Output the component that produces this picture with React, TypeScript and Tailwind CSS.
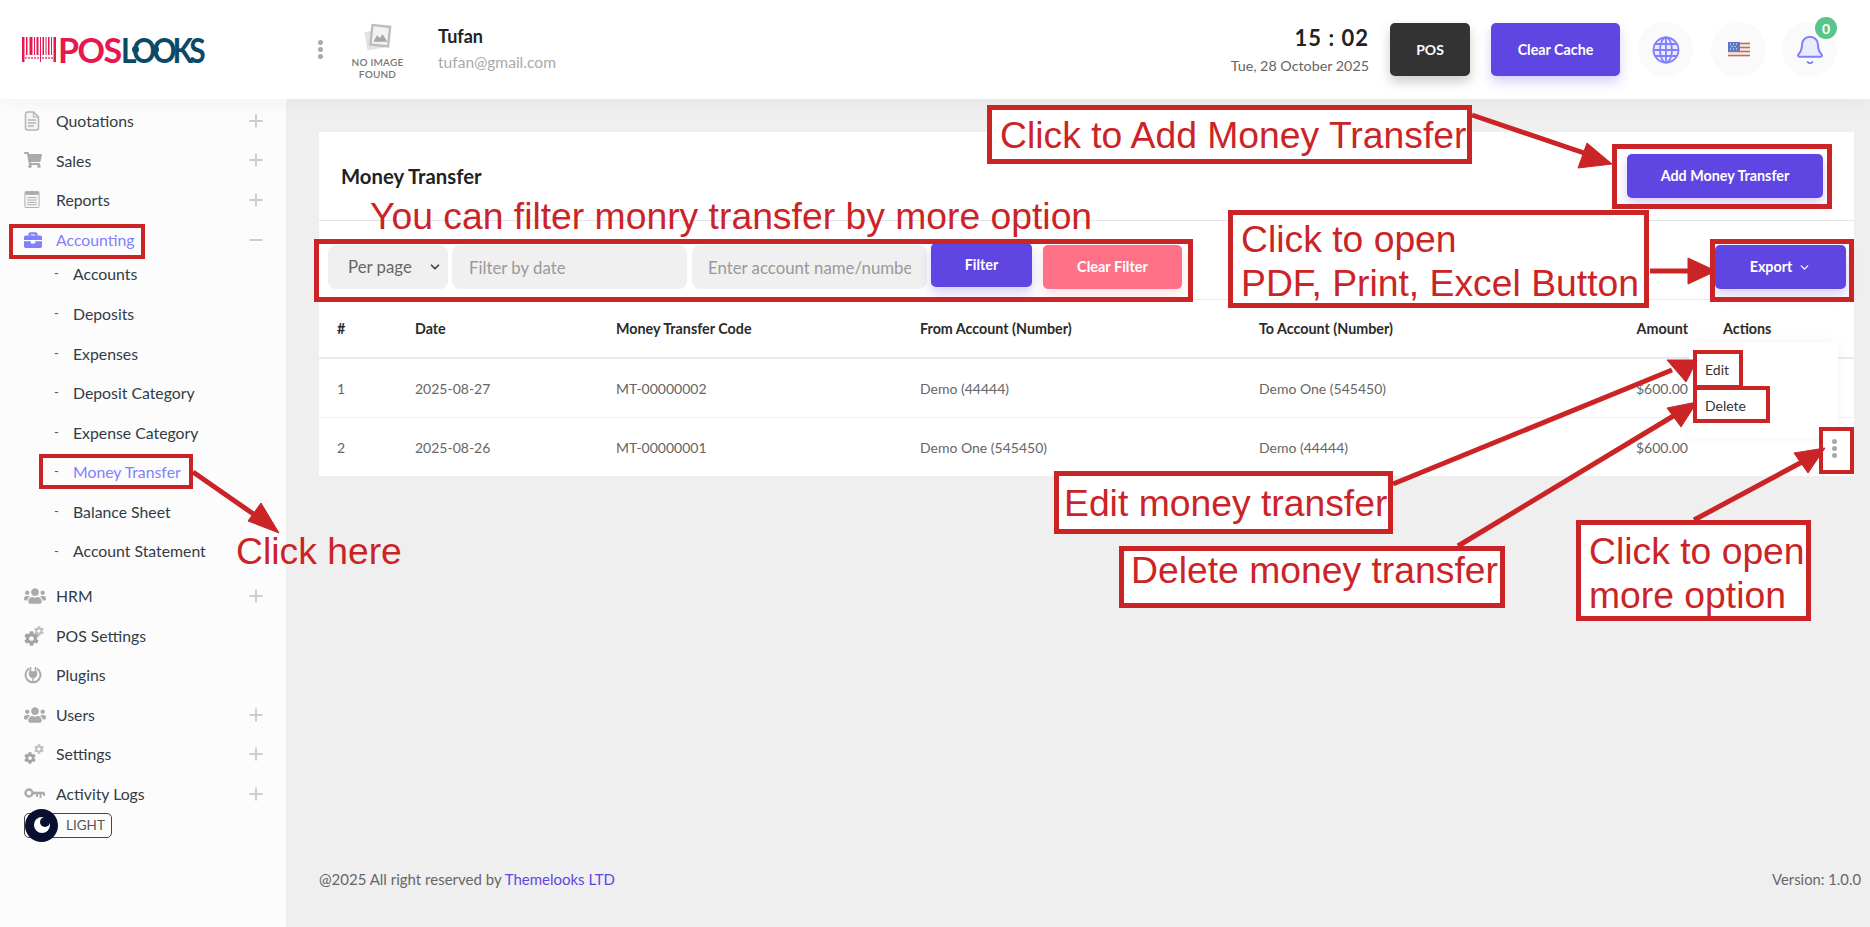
import { Bell, Plus, Minus, ChevronDown } from "lucide-react";
import { FaShoppingCart, FaBriefcase, FaUsers, FaCog } from "react-icons/fa";
import type { ReactNode } from "react";

const FileIcon = () => (
  <svg viewBox="0 0 16 20" className="w-[16px] h-[20px]">
    <path d="M1.500 3a2 2 0 0 1 2-2h6l5 5v11a2 2 0 0 1-2 2h-9a2 2 0 0 1-2-2z" fill="#f4f4f4" stroke="#b4b4b4" strokeWidth="1.500" />
    <path d="M9.500 1v5h5" fill="none" stroke="#b4b4b4" strokeWidth="1.200" />
    <path d="M4 9h8M4 12h8M4 15h6" stroke="#b4b4b4" strokeWidth="1.400" />
  </svg>
);
const ReportIcon = () => (
  <svg viewBox="0 0 16 18" className="w-[16px] h-[17px]">
    <rect x="0.500" y="0.500" width="15" height="17" rx="1" fill="#f6f6f6" stroke="#aaa" />
    <rect x="1" y="1" width="14" height="3" fill="#aaa" />
    <path d="M3 7h10M3 9.500h10M3 12h10M3 14.500h10" stroke="#aaa" strokeWidth="1" />
  </svg>
);
const PlugIcon = () => (
  <svg viewBox="0 0 18 18" className="w-[18px] h-[18px]" fill="none" stroke="#aaa">
    <path d="M5 2.500a7.500 7.500 0 1 0 8 0" strokeWidth="2" />
    <path d="M6.500 1v5M11.500 1v5" strokeWidth="1.600" />
    <path d="M5.500 6h7v2a3.500 3.500 0 0 1-7 0zM9 11v5" fill="#aaa" strokeWidth="1.400" />
  </svg>
);
const KeyIcon = () => (
  <svg viewBox="0 0 21 11" className="w-[21px] h-[11px]" fill="none" stroke="#aaa">
    <circle cx="5" cy="5" r="3.500" strokeWidth="2.400" />
    <path d="M8.500 5H20.500" strokeWidth="2.600" />
    <path d="M13 5v4M16.500 5v5M20 5v3" strokeWidth="1.800" />
  </svg>
);
const Gears = ({ big, small }: { big: number; small: number }) => (
  <span className="relative block w-[20px] h-[20px]">
    <FaCog size={big} className="absolute left-0 bottom-0 text-[#a4a4a4]" />
    <FaCog size={small} className="absolute right-0 top-0 text-[#c0c0c0]" />
  </span>
);

type Item = { label: string; icon: ReactNode; toggle?: "plus" | "minus"; active?: boolean };
const SideRow = ({ label, icon, toggle, active }: Item) => (
  <div className="h-[39.6px] flex items-center pl-[24px] pr-[20px]">
    <span className="w-[32px] flex items-center">{icon}</span>
    <span className={active ? "text-[#8080ff]" : "text-[#333b45]"}>{label}</span>
    {toggle === "plus" && <Plus size={20} strokeWidth={2.3} className="ml-auto text-[#cdcdcd]" />}
    {toggle === "minus" && <Minus size={20} strokeWidth={2.3} className="ml-auto text-[#cdcdcd]" />}
  </div>
);
const SubRow = ({ label, active }: { label: string; active?: boolean }) => (
  <div className="h-[39.6px] flex items-center pl-[54px]">
    <span className="w-[19px] text-[#555] text-[13px]">-</span>
    <span className={active ? "text-[#8080ff]" : "text-[#333b45]"}>{label}</span>
  </div>
);

const Barcode = () => (
  <svg viewBox="0 0 34 25" className="w-[34px] h-[25px]" fill="#e8174f">
    <path d="M0 0h2.500v25H0zM4 0h1.500v18H4zM7.500 0h3v18h-3zM12 0h1v18h-1zM14.500 0h2v18h-2zM18 0h1v25h-1zM20.500 0h1.500v18h-1.500zM23.500 0h1v18h-1zM26 0h1.500v18H26zM29 0h1v18h-1zM31.500 0h2.500v25h-2.500z" />
    <path d="M3 21h14M20 21h11" stroke="#e8174f" strokeWidth="2" strokeDasharray="2 1" opacity="0.6" />
  </svg>
);

const Logo = () => (
  <div className="relative flex items-center h-[25px]">
    <Barcode />
    <span className="text-[34px] leading-none font-bold tracking-[-1.5px] text-[#e8174f] ml-[2px]">POS</span>
    <span className="text-[34px] leading-none font-bold tracking-[-4.4px] text-[#0b4a66] origin-left scale-x-[0.88]">LOOKS</span>
    <span className="absolute left-[110px] top-[9px] w-[7px] h-[7px] rounded-full bg-[#0b4a66]" />
    <span className="absolute left-[130px] top-[9px] w-[7px] h-[7px] rounded-full bg-[#0b4a66]" />
  </div>
);

const NoImage = () => (
  <div className="w-[49px] mt-[3px] flex flex-col items-center">
    <svg viewBox="0 0 30 32" className="w-[28px] h-[30px]">
      <rect x="2" y="8" width="18" height="20" fill="#e2e2e2" transform="rotate(-10 11 18)" />
      <rect x="8" y="3" width="19" height="21" fill="#f2f2f2" stroke="#bdbdbd" strokeWidth="2.500" transform="rotate(6 17 13)" />
      <path d="M10 20l4-7 3 3 3-4 5 8z" fill="#a8a8a8" />
    </svg>
    <div className="text-[10px] leading-[12px] text-[#777] font-semibold text-center mt-[3px] whitespace-nowrap tracking-[0.2px]">NO IMAGE<br />FOUND</div>
  </div>
);

const Kebab = () => (
  <div className="flex flex-col gap-[2px] items-center w-[5px]">
    <span className="w-[5px] h-[5px] rounded-full bg-[#a8a8a8]" />
    <span className="w-[5px] h-[5px] rounded-full bg-[#a8a8a8]" />
    <span className="w-[5px] h-[5px] rounded-full bg-[#a8a8a8]" />
  </div>
);

const Flag = () => (
  <svg viewBox="0 0 22 15" className="w-[22px] h-[15px]">
    <rect width="22" height="15" fill="#f2ece6" />
    <path d="M0 1.500h22M0 5.500h22M0 9.500h22M0 13.500h22" stroke="#d4605c" strokeWidth="1.600" />
    <rect width="12" height="9" fill="#5a78c8" />
    <path d="M2 2h1M5 2h1M8 2h1M3.500 4.500h1M6.500 4.500h1M2 7h1M5 7h1M8 7h1" stroke="#fff" strokeWidth="1" />
  </svg>
);
const GlobeIcon = () => (
  <svg viewBox="0 0 28 28" className="w-[28px] h-[28px]" fill="#ebebff" stroke="#8080ff" strokeWidth="1.800">
    <circle cx="14" cy="14" r="12.500" />
    <ellipse cx="14" cy="14" rx="6" ry="12.500" />
    <path d="M14 1.500v25M3 8h22M1.500 14h25M3 20h22" fill="none" />
  </svg>
);

const rows = [
  ["1", "2025-08-27", "MT-00000002", "Demo (44444)", "Demo One (545450)", "$600.00"],
  ["2", "2025-08-26", "MT-00000001", "Demo One (545450)", "Demo (44444)", "$600.00"],
];
const tableCols = "grid grid-cols-[78px_201px_304px_339px_339px_90px_1fr] items-center pl-[18px]";

const Label = ({ className, children }: { className: string; children: ReactNode }) => (
  <div className={"absolute z-10 bg-white border-[5px] border-[#cb2427] font-['Liberation_Sans',sans-serif] text-[37.3px] leading-[44px] text-[#cb2427] whitespace-nowrap " + className}>{children}</div>
);

const Overlay = () => (
  <>
    <svg viewBox="0 0 1870 927" className="absolute left-0 top-0 w-[1870px] h-[927px] z-20 pointer-events-none">
      <g stroke="#cb2427" strokeWidth="5" fill="#cb2427">
        <line x1="1472" y1="115" x2="1590" y2="155" />
        <polygon points="1612,164 1587,143 1578,168" strokeWidth="1" />
        <line x1="1650" y1="271" x2="1692" y2="271" />
        <polygon points="1716,271 1688,258 1688,284" strokeWidth="1" />
        <line x1="1393" y1="484" x2="1672" y2="370" />
        <polygon points="1697,360 1667,360 1686,382" strokeWidth="1" />
        <line x1="1458" y1="546" x2="1675" y2="415" />
        <polygon points="1697,402 1667,408 1681,427" strokeWidth="1" />
        <line x1="1694" y1="520" x2="1802" y2="462" />
        <polygon points="1825,448 1794,453 1808,473" strokeWidth="1" />
        <line x1="193" y1="472" x2="262" y2="520" />
        <polygon points="279,533 248,521 261,503" strokeWidth="1" />
      </g>
    </svg>
    <div className="absolute z-10 left-[9px] top-[224px] w-[136px] h-[35px] border-[4px] border-[#cb2427]" />
    <div className="absolute z-10 left-[39px] top-[454px] w-[154px] h-[35px] border-[4px] border-[#cb2427]" />
    <div className="absolute z-10 left-[314px] top-[239px] w-[879px] h-[63px] border-[5px] border-[#cb2427]" />
    <div className="absolute z-10 left-[1612px] top-[144px] w-[220px] h-[65px] border-[5px] border-[#cb2427]" />
    <div className="absolute z-10 left-[1710px] top-[239px] w-[144px] h-[63px] border-[5px] border-[#cb2427]" />
    <div className="absolute z-10 left-[1693px] top-[350px] w-[50px] h-[39px] border-[4px] border-[#cb2427] bg-white text-[14px] text-[#333] pl-[8px] leading-[32px]">Edit</div>
    <div className="absolute z-10 left-[1693px] top-[386px] w-[77px] h-[37px] border-[4px] border-[#cb2427] bg-white text-[14px] text-[#333] pl-[8px] leading-[31px]">Delete</div>
    <div className="absolute z-10 left-[1819px] top-[427px] w-[35px] h-[47px] border-[4px] border-[#cb2427] bg-white flex items-center pl-[9px] pb-[5px]"><Kebab /></div>
    <Label className="left-[987px] top-[105px] w-[485px] h-[59px] pl-[8px] pt-[3px]">Click to Add Money Transfer</Label>
    <Label className="left-[1228px] top-[210px] w-[421px] h-[98px] pl-[8px] pt-[2px]">Click to open<br />PDF, Print, Excel Button</Label>
    <Label className="left-[1054px] top-[471px] w-[339px] h-[63px] pl-[5px] pt-[5px]">Edit money transfer</Label>
    <Label className="left-[1119px] top-[546px] w-[386px] h-[62px] pl-[7px]"><span className="block -mt-[3px]">Delete money transfer</span></Label>
    <Label className="left-[1576px] top-[520px] w-[235px] h-[101px] pl-[8px] pt-[4px]">Click to open<br />more option</Label>
    <div className="absolute z-10 left-[370px] top-[194px] font-['Liberation_Sans',sans-serif] text-[37.3px] leading-[44px] text-[#cb2427] whitespace-nowrap">You can filter monry transfer by more option</div>
    <div className="absolute z-10 left-[236px] top-[529px] font-['Liberation_Sans',sans-serif] text-[37.3px] leading-[44px] text-[#cb2427] whitespace-nowrap">Click here</div>
  </>
);

export default function App() {
  return (
    <div className="relative w-[1870px] h-[927px] overflow-hidden bg-[#efefef] font-['Lato',sans-serif] text-[15.8px] flex flex-col">
      <header className="h-[99px] shrink-0 bg-white flex items-center pl-[22px] pr-[33px] shadow-[0_4px_20px_rgba(0,0,0,0.04)] z-[1]">
        <div className="w-[296px]"><Logo /></div>
        <Kebab />
        <div className="ml-[30px]"><NoImage /></div>
        <div className="ml-[36px] -mt-[4px]">
          <div className="text-[18px] font-bold text-[#222] leading-[24px]">Tufan</div>
          <div className="text-[15.6px] text-[#aaa] mt-[4px] leading-[20px]">tufan@gmail.com</div>
        </div>
        <div className="ml-auto text-right">
          <div className="text-[22px] font-bold text-[#222] leading-[28px] tracking-[1px]">15 : 02</div>
          <div className="text-[14.3px] text-[#666] leading-[18px] mt-[5px]">Tue, 28 October 2025</div>
        </div>
        <div className="ml-[21px] w-[80px] h-[53px] rounded-[5px] bg-[#333] text-white text-[14px] font-bold flex items-center justify-center shadow-[0_6px_12px_rgba(0,0,0,0.2)]">POS</div>
        <div className="ml-[21px] w-[129px] h-[53px] rounded-[5px] bg-[#5f45e2] text-white text-[14.3px] font-bold flex items-center justify-center shadow-[0_6px_12px_rgba(95,69,226,0.25)]">Clear Cache</div>
        <div className="ml-[18px] w-[55px] h-[55px] rounded-full bg-[#fafafa] flex items-center justify-center"><GlobeIcon /></div>
        <div className="ml-[18px] w-[55px] h-[55px] rounded-full bg-[#fafafa] flex items-center justify-center"><Flag /></div>
        <div className="relative ml-[16px] w-[55px] h-[55px] rounded-full bg-[#fafafa] flex items-center justify-center">
          <Bell size={32} strokeWidth={1.5} fill="#ebebff" className="text-[#8080ff]" />
          <span className="absolute right-0 top-[-5px] w-[22px] h-[22px] rounded-full bg-[#5ac58b] text-white text-[14px] font-bold flex items-center justify-center">0</span>
        </div>
      </header>

      <div className="flex flex-1 min-h-0">
        <aside className="w-[286px] shrink-0 bg-[#fcfcfc] pt-[2px]">
          <SideRow label="Quotations" toggle="plus" icon={<FileIcon />} />
          <SideRow label="Sales" toggle="plus" icon={<FaShoppingCart size={18} className="text-[#aaa]" />} />
          <SideRow label="Reports" toggle="plus" icon={<ReportIcon />} />
          <SideRow label="Accounting" toggle="minus" active icon={<FaBriefcase size={18} className="text-[#8080ff]" />} />
          <div className="-mt-[5px]">
            <SubRow label="Accounts" />
            <SubRow label="Deposits" />
            <SubRow label="Expenses" />
            <SubRow label="Deposit Category" />
            <SubRow label="Expense Category" />
            <SubRow label="Money Transfer" active />
            <SubRow label="Balance Sheet" />
            <SubRow label="Account Statement" />
          </div>
          <div className="h-[5px]" />
          <SideRow label="HRM" toggle="plus" icon={<FaUsers size={22} className="text-[#aaa]" />} />
          <SideRow label="POS Settings" icon={<Gears big={15} small={10} />} />
          <SideRow label="Plugins" icon={<PlugIcon />} />
          <SideRow label="Users" toggle="plus" icon={<FaUsers size={22} className="text-[#aaa]" />} />
          <SideRow label="Settings" toggle="plus" icon={<Gears big={12} small={10} />} />
          <SideRow label="Activity Logs" toggle="plus" icon={<KeyIcon />} />
          <div className="relative ml-[24px] mt-[-1px] w-[88px] h-[25px] border border-[#444] rounded-[5px] text-[13.5px] text-[#555] pl-[41px] leading-[23px]">
            LIGHT
            <span className="absolute left-[0px] top-[-5px] w-[33px] h-[33px] rounded-full bg-[#071030] flex items-center justify-center">
              <svg viewBox="0 0 16 16" className="w-[16px] h-[16px]"><circle cx="8" cy="8" r="8" fill="#fff" /><circle cx="11" cy="5" r="5" fill="#071030" /></svg>
            </span>
          </div>
        </aside>

        <main className="flex-1 min-w-0 pl-[33px] pr-[16px] pt-[33px] flex flex-col">
          <section className="relative bg-white h-[344px] text-[14px]">
            <div className="h-[88px] flex items-start pl-[22px] pr-[31px] justify-between">
              <h1 className="mt-[30px] text-[20.3px] font-bold leading-[28px] text-[#222]">Money Transfer</h1>
              <div className="mt-[22px] w-[196px] h-[44px] rounded-[5px] bg-[#5f45e2] text-white text-[14.3px] font-bold flex items-center justify-center shadow-[0_6px_12px_rgba(95,69,226,0.25)]">Add Money Transfer</div>
            </div>
            <div className="h-[1px] bg-[#e3e3ea]" />
            <div className="h-[79px] border-b border-[#e8e8ee] flex items-start pt-[24px] pl-[9px] pr-[8px] gap-[4px]">
              <div className="w-[120px] h-[44px] rounded-[8px] bg-[#f0f0f0] flex items-center pl-[20px] pr-[6px] text-[16.8px] text-[#666]">Per page<ChevronDown size={14} strokeWidth={3} className="ml-auto text-[#444]" /></div>
              <input readOnly placeholder="Filter by date" className="w-[235px] h-[44px] rounded-[8px] bg-[#f0f0f0] pl-[17px] text-[16.8px] placeholder:text-[#999] outline-none" />
              <input readOnly placeholder="Enter account name/number" className="ml-[1px] w-[235px] h-[44px] rounded-[8px] bg-[#f0f0f0] pl-[16px] pr-[16px] text-[16.8px] placeholder:text-[#999] outline-none" />
              <div className="w-[101px] h-[44px] -mt-[2px] rounded-[5px] bg-[#5f45e2] text-white text-[14.3px] font-bold flex items-center justify-center shadow-[0_6px_12px_rgba(95,69,226,0.25)]">Filter</div>
              <div className="ml-[7px] w-[139px] h-[44px] rounded-[5px] bg-[#ff7186] text-white text-[14.5px] font-bold flex items-center justify-center shadow-[0_6px_12px_rgba(255,113,134,0.2)]">Clear Filter</div>
              <div className="ml-auto w-[131px] h-[44px] rounded-[5px] bg-[#5f45e2] text-white text-[14.3px] font-bold flex items-center justify-center gap-[6px] shadow-[0_6px_12px_rgba(95,69,226,0.25)]">Export<ChevronDown size={13} strokeWidth={2.5} /></div>
            </div>
            <div className={tableCols + " h-[59px] border-b-2 border-[#e8e8ee] font-bold text-[14.3px] text-[#2b2b2b]"}>
              <div>#</div><div>Date</div><div>Money Transfer Code</div><div>From Account (Number)</div><div>To Account (Number)</div><div className="text-right">Amount</div><div className="pl-[35px]">Actions</div>
            </div>
            {rows.map((r, i) => (
              <div key={r[0]} className={tableCols + " h-[59px] text-[#666] " + (i === 0 ? "border-b border-[#f0f0f4]" : "")}>
                {r.map((c, j) => <div key={j} className={j === 5 ? "text-right" : ""}>{c}</div>)}
                <div className="flex justify-end pr-[17px]"><Kebab /></div>
              </div>
            ))}
            <div className="absolute left-[1370px] top-[210px] w-[149px] h-[96px] bg-white shadow-[0_0_12px_rgba(0,0,0,0.05)]" />
          </section>
          <footer className="mt-auto pb-[38px] flex justify-between text-[15px] text-[#666] leading-[20px]">
            <div>@2025 All right reserved by <span className="text-[#5f45e2]">Themelooks LTD</span></div>
            <div className="mr-[-7px] text-[14.8px]">Version: 1.0.0</div>
          </footer>
        </main>
      </div>
      <Overlay />
    </div>
  );
}
